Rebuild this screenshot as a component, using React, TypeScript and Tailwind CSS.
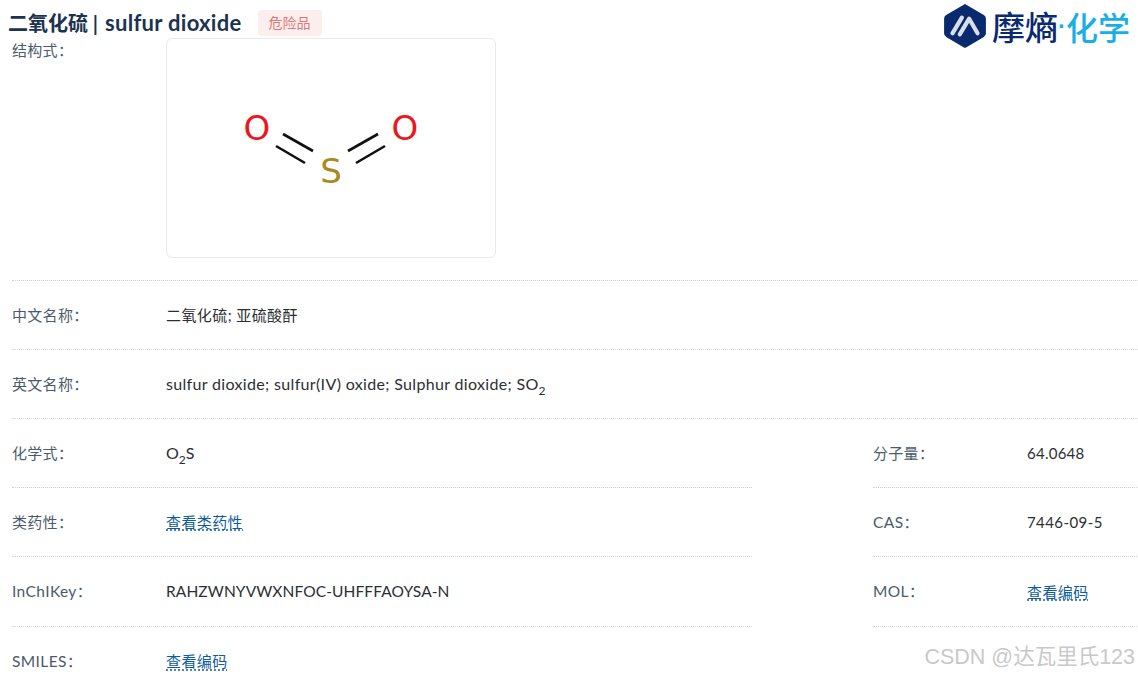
import type { ReactNode } from "react";

function Label({ children }: { children: ReactNode }) {
  return <span className="text-[15px] tracking-[0.3px] text-[#4b5b6c]">{children}</span>;
}

function Latin({ children }: { children: ReactNode }) {
  return <span className="text-[15.5px] tracking-[0.4px]">{children}</span>;
}

function Link({ children }: { children: ReactNode }) {
  return (
    <a className="text-[15px] tracking-[0.4px] text-[#0f5c9c] underline decoration-dotted underline-offset-2">
      {children}
    </a>
  );
}

function Val({ children, track = "tracking-[0.42px]" }: { children: ReactNode; track?: string }) {
  return <span className={`text-[15px] text-[#2b2f33] ${track}`}>{children}</span>;
}

function Row({ label, children, className, height = "h-[69px]" }: { label: ReactNode; children: ReactNode; className: string; height?: string }) {
  return (
    <div className={`flex ${height} items-center border-b border-dotted border-[#d2d2d2] ${className}`}>
      <div className="w-[154px]"><Label>{label}</Label></div>
      <div>{children}</div>
    </div>
  );
}

function Sub({ children }: { children: ReactNode }) {
  return <sub className="text-[12px] align-[-2px] leading-none">{children}</sub>;
}

export default function App() {
  const left = "w-[740px]";
  const right = "w-[264px]";
  return (
    <div className="relative h-[677px] w-[1138px] overflow-hidden bg-white font-['Lato','Noto_Sans_CJK_SC',sans-serif]">
      <header className="flex h-[38px] items-center pl-[8px] pr-[8px]">
        <h1 className="mt-[8px] text-[20px] font-bold leading-none text-[#1b3350]">二氧化硫 | <span className="ml-[2px] text-[22px] tracking-[0.3px]">sulfur dioxide</span></h1>
        <span className="ml-[16px] mt-[8px] rounded-[4px] bg-[#fdeeee] px-[11px] py-[4px] text-[14px] leading-[18px] text-[#e2777a]">危险品</span>
        <div className="ml-auto mt-[14px] flex items-center">
          <svg width="44" height="46" viewBox="0 0 42 44">
            <path d="M21 1 L39 11.5 Q41 12.7 41 15 V29 Q41 31.3 39 32.5 L22 42.5 Q21 43 20 42.5 L3 32.5 Q1 31.3 1 29 V15 Q1 12.7 3 11.5 Z" fill="#0a2a70" />
            <path d="M9 29 L18 14" stroke="#d9dee8" strokeWidth="4" strokeLinecap="round" fill="none" />
            <path d="M16 30 L25 15 L33 29" stroke="#d9dee8" strokeWidth="4" strokeLinecap="round" strokeLinejoin="round" fill="none" />
          </svg>
          <span className="ml-[5px] text-[33px] font-medium leading-none text-[#0a2a70] font-['Noto_Sans_CJK_SC',sans-serif]">摩熵</span>
          <span className="flex h-[8px] w-[8px] items-center justify-center overflow-visible text-[24px] font-bold leading-none text-[#18aee8] font-['Liberation_Sans',sans-serif]">·</span>
          <span className="text-[32px] font-medium leading-none text-[#18aee8] font-['Noto_Sans_CJK_SC',sans-serif]">化学</span>
        </div>
      </header>

      <main className="flex flex-col pl-[12px]">
        <div className="flex h-[243px] w-[1126px] border-b border-dotted border-[#d2d2d2]">
          <div className="w-[154px] leading-[24px]"><Label>结构式：</Label></div>
          <div className="h-[220px] w-[330px] rounded-[6px] border border-[#e8e8e8]">
            <svg width="328" height="218" viewBox="0 0 328 218">
              <text x="90" y="101" textAnchor="middle" fontSize="34" fill="#f0141c" fontFamily="DejaVu Sans">O</text>
              <text x="238" y="101" textAnchor="middle" fontSize="34" fill="#f0141c" fontFamily="DejaVu Sans">O</text>
              <text x="164" y="144" textAnchor="middle" fontSize="34" fill="#a88a1f" fontFamily="DejaVu Sans">S</text>
              <g stroke="#111" strokeWidth="2.6">
                <path d="M116 95 L146 112" />
                <path d="M109 107 L138 124" />
                <path d="M211 95 L181 112" />
                <path d="M218 107 L189 124" />
              </g>
            </svg>
          </div>
        </div>
        <Row label="中文名称：" className="w-[1126px]"><Val>二氧化硫; 亚硫酸酐</Val></Row>
        <Row label="英文名称：" className="w-[1126px]"><span className="text-[16px] tracking-[0.33px] text-[#2b2f33]">sulfur dioxide; sulfur(IV) oxide; Sulphur dioxide; SO<Sub>2</Sub></span></Row>
        <div className="flex gap-[121px]">
          <div className="flex flex-col">
            <Row label="化学式：" className={left}><span className="text-[16px] text-[#2b2f33]">O<Sub>2</Sub>S</span></Row>
            <Row label="类药性：" className={left}><Link>查看类药性</Link></Row>
            <Row label={<><Latin>InChIKey</Latin>：</>} className={left} height="h-[70px]"><span className="text-[15.5px] tracking-[0.1px] text-[#2b2f33]">RAHZWNYVWXNFOC-UHFFFAOYSA-N</span></Row>
            <div className={`flex h-[69px] items-center ${left}`}>
              <div className="w-[154px]"><Label><Latin>SMILES</Latin>：</Label></div>
              <Link>查看编码</Link>
            </div>
          </div>
          <div className="flex flex-col">
            <Row label="分子量：" className={right}><Val track="tracking-[0.25px]">64.0648</Val></Row>
            <Row label={<><Latin>CAS</Latin>：</>} className={right}><Val>7446-09-5</Val></Row>
            <Row label={<><Latin>MOL</Latin>：</>} className={right} height="h-[70px]"><Link>查看编码</Link></Row>
          </div>
        </div>
      </main>

      <span className="absolute right-[3px] top-[647px] text-[21.5px] leading-none text-[#c9c9c9] font-['Liberation_Sans','Noto_Sans_CJK_SC',sans-serif]">CSDN @达瓦里氏123</span>
    </div>
  );
}
